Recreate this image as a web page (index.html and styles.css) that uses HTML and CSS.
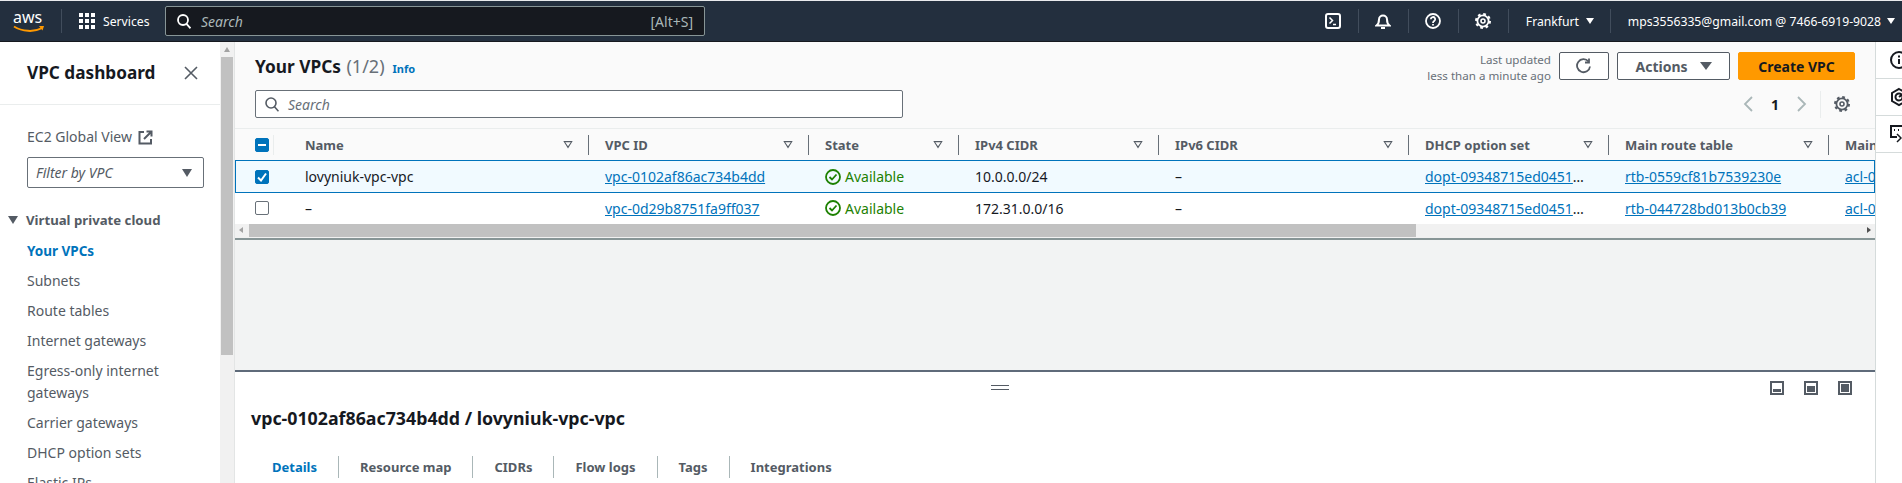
FILE: index.html
```html
<!DOCTYPE html>
<html>
  <head>
    <meta charset="UTF-8" />
    <title>Your VPCs | VPC Console</title>
    <link rel="stylesheet" href="styles.css">
  </head>
  <body>
    <header class="topbar">
      <div class="logo">
        <span class="logo-text">aws</span>
        <svg class="smile" width="32" height="8" viewBox="0 0 32 8"><path d="M1 1.5c8 5 20 6 28 1.5" fill="none" stroke="#f90" stroke-width="2"/><path d="M26 1l5 0-1.500 4.500z" fill="#f90"/></svg>
      </div>
      <div class="services">
        <svg width="16" height="16" viewBox="0 0 16 16" fill="#fff"><rect width="4" height="4"/><rect x="6" width="4" height="4"/><rect x="12" width="4" height="4"/><rect y="6" width="4" height="4"/><rect x="6" y="6" width="4" height="4"/><rect x="12" y="6" width="4" height="4"/><rect y="12" width="4" height="4"/><rect x="6" y="12" width="4" height="4"/><rect x="12" y="12" width="4" height="4"/></svg>
        <span>Services</span>
      </div>
      <div class="global-search">
        <svg width="14" height="15" viewBox="0 0 14 15" fill="none" stroke="#fff" stroke-width="1.800"><circle cx="6" cy="6" r="5"/><path d="M9.500 9.800l4 4.500"/></svg>
        <span class="placeholder">Search</span>
        <span class="shortcut">[Alt+S]</span>
      </div>
      <div class="top-actions">
        <div class="top-item icon-item">
          <svg width="16" height="16" viewBox="0 0 16 16" fill="none" stroke="#fff" stroke-width="2"><rect x="1" y="1" width="14" height="14" rx="2"/><path d="M4.500 4.500l3 3-3 3" stroke-width="1.500"/><path d="M8 11.500h3" stroke-width="1.500"/></svg>
        </div>
        <div class="top-item icon-item">
          <svg width="16" height="17" viewBox="0 0 16 17" fill="none" stroke="#fff" stroke-width="2"><path d="M1.500 12.500c2-1.500 2.500-3 2.500-6a4 4 0 0 1 8 0c0 3 .5 4.500 2.500 6z"/><path d="M6 15h4"/></svg>
        </div>
        <div class="top-item icon-item">
          <svg width="16" height="16" viewBox="0 0 16 16" fill="none" stroke="#fff" stroke-width="1.800"><circle cx="8" cy="8" r="7"/><path d="M5.800 6.200a2.200 2.200 0 1 1 3.300 1.900c-.8.500-1.100 1-1.100 1.900"/><path d="M8 11v1.500"/></svg>
        </div>
        <div class="top-item icon-item">
          <svg width="16" height="16" viewBox="0 0 16 16" fill="none" stroke="#fff"><circle cx="8" cy="8" r="5.600" stroke-width="1.800"/><circle cx="8" cy="8" r="7" stroke-width="2" stroke-dasharray="2.750 2.750"/><circle cx="8" cy="8" r="2" stroke-width="1.600"/></svg>
        </div>
        <div class="top-item region">Frankfurt <i class="caret"></i></div>
        <div class="top-item account">mps3556335@gmail.com @ 7466-6919-9028 <i class="caret"></i></div>
      </div>
    </header>

    <div class="shell">
      <nav class="sidebar">
        <div class="side-head">
          <h2>VPC dashboard</h2>
          <svg width="14" height="14" viewBox="0 0 14 14" fill="none" stroke="#545b64" stroke-width="1.600"><path d="M1 1l12 12M13 1L1 13"/></svg>
        </div>
        <div class="side-body">
          <a class="side-link ec2">EC2 Global View
            <svg width="15" height="15" viewBox="0 0 15 15" fill="none" stroke="#545b64" stroke-width="2"><path d="M6 2H1.500v11.500H13V9"/><path d="M8.500 1.500h5v5M13.500 1.500L6 9"/></svg>
          </a>
          <div class="side-filter"><span>Filter by VPC</span><i class="caret dark"></i></div>
          <div class="side-section"><i class="caret dark"></i>Virtual private cloud</div>
          <ul class="side-list">
            <li class="current">Your VPCs</li>
            <li>Subnets</li>
            <li>Route tables</li>
            <li>Internet gateways</li>
            <li class="two-line">Egress-only internet gateways</li>
            <li>Carrier gateways</li>
            <li>DHCP option sets</li>
            <li>Elastic IPs</li>
          </ul>
        </div>
      </nav>
      <div class="side-scroll"><i class="scroll-up"></i><div class="scroll-thumb"></div></div>

      <main class="main">
        <section class="list-head">
          <div class="title-row">
            <div class="title-left">
              <h1>Your VPCs <span class="count">(1/2)</span></h1>
              <a class="info">Info</a>
            </div>
            <div class="title-actions">
              <div class="updated">Last updated<br />less than a minute ago</div>
              <button class="btn refresh" type="button">
                <svg width="16" height="16" viewBox="0 0 16 16" fill="none" stroke="#545b64" stroke-width="1.800"><path d="M12.500 3.500A6.500 6.500 0 1 0 14 8.500"/><path d="M13 .5v4H9"/></svg>
              </button>
              <button class="btn actions" type="button">Actions <i class="caret grey"></i></button>
              <button class="btn primary" type="button">Create VPC</button>
            </div>
          </div>
          <div class="tools-row">
            <div class="table-search">
              <svg width="14" height="15" viewBox="0 0 14 15" fill="none" stroke="#545b64" stroke-width="1.600"><circle cx="6" cy="6" r="5"/><path d="M9.500 9.800l4 4.500"/></svg>
              <span>Search</span>
            </div>
            <div class="pager">
              <svg width="10" height="16" viewBox="0 0 10 16" fill="none" stroke="#aab7b8" stroke-width="1.800"><path d="M9 1L2 8l7 7"/></svg>
              <b>1</b>
              <svg width="10" height="16" viewBox="0 0 10 16" fill="none" stroke="#aab7b8" stroke-width="1.800"><path d="M1 1l7 7-7 7"/></svg>
              <span class="pager-rule"></span>
              <svg width="16" height="16" viewBox="0 0 16 16" fill="none" stroke="#545b64"><circle cx="8" cy="8" r="5.600" stroke-width="1.800"/><circle cx="8" cy="8" r="7" stroke-width="2" stroke-dasharray="2.750 2.750"/><circle cx="8" cy="8" r="2" stroke-width="1.600"/></svg>
            </div>
          </div>
        </section>

        <section class="table">
          <div class="row head">
            <div class="cell check"><span class="box on"><i class="dash"></i></span></div>
            <div class="cell name">Name<i class="filter"></i></div>
            <div class="cell">VPC ID<i class="filter"></i></div>
            <div class="cell">State<i class="filter"></i></div>
            <div class="cell">IPv4 CIDR<i class="filter"></i></div>
            <div class="cell">IPv6 CIDR<i class="filter"></i></div>
            <div class="cell">DHCP option set<i class="filter"></i></div>
            <div class="cell">Main route table<i class="filter"></i></div>
            <div class="cell">Main network ACL<i class="filter"></i></div>
          </div>
          <div class="row selected">
            <div class="cell check"><span class="box on">
              <svg width="10" height="10" viewBox="0 0 10 10" fill="none" stroke="#fff" stroke-width="2"><path d="M1 5.500l3 3 5-7"/></svg>
            </span></div>
            <div class="cell name">lovyniuk-vpc-vpc</div>
            <div class="cell"><a>vpc-0102af86ac734b4dd</a></div>
            <div class="cell"><span class="ok">
              <svg width="16" height="16" viewBox="0 0 16 16" fill="none" stroke="#1d8102" stroke-width="1.800"><circle cx="8" cy="8" r="7"/><path d="M4.500 8l2.500 2.500 4.500-5"/></svg>Available</span></div>
            <div class="cell">10.0.0.0/24</div>
            <div class="cell">–</div>
            <div class="cell"><a>dopt-09348715ed0451</a>…</div>
            <div class="cell"><a>rtb-0559cf81b7539230e</a></div>
            <div class="cell"><a>acl-0f3a7d21c9e84b6a1</a></div>
          </div>
          <div class="row">
            <div class="cell check"><span class="box"></span></div>
            <div class="cell name">–</div>
            <div class="cell"><a>vpc-0d29b8751fa9ff037</a></div>
            <div class="cell"><span class="ok">
              <svg width="16" height="16" viewBox="0 0 16 16" fill="none" stroke="#1d8102" stroke-width="1.800"><circle cx="8" cy="8" r="7"/><path d="M4.500 8l2.500 2.500 4.500-5"/></svg>Available</span></div>
            <div class="cell">172.31.0.0/16</div>
            <div class="cell">–</div>
            <div class="cell"><a>dopt-09348715ed0451</a>…</div>
            <div class="cell"><a>rtb-044728bd013b0cb39</a></div>
            <div class="cell"><a>acl-0b52e6f08d17c3a94</a></div>
          </div>
          <div class="hscroll">
            <i class="arrow left"></i>
            <div class="hthumb"></div>
            <i class="arrow right"></i>
          </div>
        </section>

        <div class="gap"></div>

        <section class="split">
          <div class="handle"></div>
          <div class="split-modes">
            <svg width="14" height="14" viewBox="0 0 14 14"><rect x="1" y="1" width="12" height="12" fill="none" stroke="#545b64" stroke-width="2"/><rect x="3" y="8" width="8" height="3" fill="#545b64"/></svg>
            <svg width="14" height="14" viewBox="0 0 14 14"><rect x="1" y="1" width="12" height="12" fill="none" stroke="#545b64" stroke-width="2"/><rect x="3" y="5" width="8" height="6" fill="#545b64"/></svg>
            <svg width="14" height="14" viewBox="0 0 14 14"><rect x="1" y="1" width="12" height="12" fill="none" stroke="#545b64" stroke-width="2"/><rect x="3" y="3" width="8" height="8" fill="#545b64"/></svg>
          </div>
          <h2>vpc-0102af86ac734b4dd / lovyniuk-vpc-vpc</h2>
          <div class="tabs">
            <span class="tab active">Details</span>
            <span class="tab">Resource map</span>
            <span class="tab">CIDRs</span>
            <span class="tab">Flow logs</span>
            <span class="tab">Tags</span>
            <span class="tab">Integrations</span>
          </div>
        </section>
      </main>

      <aside class="rail">
        <div class="rail-item">
          <svg width="20" height="20" viewBox="0 0 20 20" fill="none" stroke="#16191f" stroke-width="2"><circle cx="10" cy="10" r="8"/><path d="M10 9v5M10 5.500v2"/></svg>
        </div>
        <div class="rail-item">
          <svg width="20" height="20" viewBox="0 0 20 20" fill="none" stroke="#16191f" stroke-width="2"><path d="M10 2l7 4v8l-7 4-7-4V6z"/><path d="M10 10l5-4" /><circle cx="10" cy="10" r="3.500"/></svg>
        </div>
        <div class="rail-item">
          <svg width="20" height="20" viewBox="0 0 20 20" fill="none" stroke="#16191f" stroke-width="2"><path d="M8 13H2V2h16v7"/><path d="M5 6h2M9 6h2M13 6h2" stroke-dasharray="1 1"/><path d="M8 10l4 4-4 4" stroke-width="1.500"/><path d="M13 18h6"/></svg>
        </div>
      </aside>
    </div>
  </body>
</html>
```

FILE: styles.css
```css
* {
  box-sizing: border-box;
}
html,
body {
  height: 100%;
}
body {
  margin: 0;
  overflow: hidden;
  display: flex;
  flex-direction: column;
  font-family: "Noto Sans", sans-serif;
  font-size: 14px;
  color: #16191f;
  background: #f2f3f3;
}
h1,
h2,
ul {
  margin: 0;
  padding: 0;
}
.caret {
  display: inline-block;
  width: 0;
  height: 0;
  border-left: 4px solid transparent;
  border-right: 4px solid transparent;
  border-top: 6px solid #fff;
}
.caret.dark {
  border-left-width: 5px;
  border-right-width: 5px;
  border-top: 8px solid #545b64;
}
.caret.grey {
  border-left-width: 6px;
  border-right-width: 6px;
  border-top: 8px solid #545b64;
}

/* top bar */
.topbar {
  flex: 0 0 42px;
  display: flex;
  align-items: center;
  background: #232f3e;
  border-top: 1px solid #e9ebed;
  border-bottom: 1px solid #16191f;
  color: #fff;
  font-size: 12.2px;
}
.logo {
  position: relative;
  width: 62px;
  height: 24px;
  border-right: 1px solid #414d5c;
}
.logo-text {
  display: block;
  padding-left: 13px;
  font-size: 16px;
  line-height: 16px;
}
.smile {
  position: absolute;
  left: 13px;
  top: 16px;
}
.services {
  display: flex;
  align-items: center;
  gap: 8px;
  margin-left: 17px;
  width: 86px;
}
.global-search {
  width: 540px;
  height: 30px;
  display: flex;
  align-items: center;
  padding: 0 11px;
  background: #16191f;
  border: 1px solid #879596;
  border-radius: 2px;
  color: #aab7b8;
  font-size: 14px;
}
.global-search .placeholder {
  margin-left: 10px;
  flex: 1;
  font-style: italic;
}
.top-actions {
  margin-left: auto;
  display: flex;
  align-items: center;
  height: 100%;
}
.top-item {
  height: 24px;
  display: flex;
  align-items: center;
  border-right: 1px solid #414d5c;
}
.icon-item {
  width: 50px;
  justify-content: center;
}
.region {
  width: 102px;
  padding-left: 17px;
  gap: 7px;
}
.account {
  border-right: 0;
  padding-left: 17px;
  padding-right: 7px;
  gap: 6px;
}

/* layout */
.shell {
  flex: 1;
  display: flex;
  min-height: 0;
}
.sidebar {
  flex: 0 0 220px;
  background: #fff;
  overflow: hidden;
  color: #545b64;
}
.side-head {
  height: 63px;
  padding: 0 22px 0 27px;
  display: flex;
  align-items: center;
  justify-content: space-between;
  border-bottom: 1px solid #eaeded;
}
.side-head h2 {
  font-size: 17.2px;
  color: #16191f;
  font-weight: 700;
  line-height: 24px;
}
.side-body {
  padding: 20px 0 0 27px;
}
.side-link {
  display: flex;
  align-items: center;
  gap: 6px;
  line-height: 24px;
}
.side-filter {
  width: 177px;
  height: 31px;
  margin-top: 8px;
  padding: 0 11px 0 8px;
  display: flex;
  align-items: center;
  justify-content: space-between;
  border: 1px solid #687078;
  border-radius: 2px;
  font-style: italic;
}
.side-section {
  margin: 20px 0 0 -19px;
  height: 24px;
  display: flex;
  align-items: center;
  gap: 8px;
  font-weight: 700;
  font-size: 13.2px;
}
.side-list {
  list-style: none;
  margin-top: 4px;
}
.side-list li {
  line-height: 22px;
  padding: 4px 0;
  height: 30px;
}
.side-list li.two-line {
  height: 52px;
  width: 150px;
}
.side-list li.current {
  color: #0073bb;
  font-weight: 700;
  font-size: 13.5px;
}
.side-scroll {
  position: relative;
  flex: 0 0 15px;
  background: #f1f1f1;
  border-right: 1px solid #e3e5e5;
}
.scroll-up {
  position: absolute;
  left: 4px;
  top: 5px;
  width: 0;
  height: 0;
  border-left: 3px solid transparent;
  border-right: 3px solid transparent;
  border-bottom: 5px solid #a3a3a3;
}
.scroll-thumb {
  position: absolute;
  left: 1px;
  right: 1px;
  top: 15px;
  height: 298px;
  background: #c1c1c1;
}
.main {
  flex: 1;
  min-width: 0;
  display: flex;
  flex-direction: column;
}
.rail {
  flex: 0 0 27px;
  background: #fff;
  border-left: 1px solid #d5dbdb;
  overflow: hidden;
}
.rail-item {
  height: 37px;
  padding: 8px 0 0 13px;
  border-bottom: 1px solid #d5dbdb;
}
.rail-item svg {
  display: block;
}

/* list header */
.list-head {
  height: 87px;
  padding: 10px 20px 0;
  background: #fafafa;
  border-bottom: 1px solid #eaeded;
}
.title-row {
  display: flex;
  justify-content: space-between;
  align-items: center;
  height: 28px;
}
.title-left {
  display: flex;
  align-items: baseline;
  gap: 8px;
}
.title-left h1 {
  font-size: 17.3px;
  font-weight: 700;
  line-height: 24px;
}
.count {
  font-weight: 400;
  font-size: 18px;
  margin-left: 1px;
  color: #687078;
}
.info {
  color: #0073bb;
  font-size: 11px;
  font-weight: 700;
}
.title-actions {
  display: flex;
  align-items: center;
  gap: 8px;
}
.updated {
  padding-top: 4px;
  text-align: right;
  color: #687078;
  font-size: 11.6px;
  line-height: 16px;
}
.btn {
  height: 28px;
  border: 1px solid #545b64;
  border-radius: 2px;
  background: #fff;
  font-family: inherit;
  font-size: 14px;
  font-weight: 700;
  color: #545b64;
  display: flex;
  align-items: center;
  justify-content: center;
}
.refresh {
  width: 50px;
}
.actions {
  width: 113px;
  gap: 12px;
}
.primary {
  width: 117px;
  background: #ff9900;
  border-color: #ff9900;
  color: #16191f;
}
.tools-row {
  margin-top: 10px;
  display: flex;
  justify-content: space-between;
  align-items: center;
}
.table-search {
  width: 648px;
  height: 28px;
  padding: 0 9px;
  display: flex;
  align-items: center;
  gap: 9px;
  background: #fff;
  border: 1px solid #687078;
  border-radius: 2px;
  color: #687078;
  font-style: italic;
}
.pager {
  display: flex;
  align-items: center;
  height: 28px;
  padding-right: 5px;
}
.pager b {
  width: 44px;
  text-align: center;
}
.pager-rule {
  width: 1px;
  height: 27px;
  margin: 0 13px;
  background: #eaeded;
}

/* table */
.table {
  position: relative;
  overflow: hidden;
  background: #fff;
  border-bottom: 2px solid #879596;
}
.row {
  display: grid;
  grid-template-columns: 39px 315px 220px 150px 200px 250px 200px 220px 220px;
  height: 32px;
  align-items: center;
  margin-top: -1px;
}
.row.head {
  margin-top: 0;
  height: 32px;
  background: #fafafa;
  color: #545b64;
  font-weight: 700;
  font-size: 13px;
  border-bottom: 1px solid #eaeded;
}
.row.selected {
  height: 33px;
  background: #f1faff;
  box-shadow: inset 0 0 0 1px #0073bb;
}
.cell {
  position: relative;
  display: flex;
  align-items: center;
  padding: 0 16px;
  white-space: nowrap;
  overflow: hidden;
}
.head .cell {
  height: 20px;
  justify-content: space-between;
  border-right: 1px solid #687078;
}
.head .cell.check {
  border-right-color: #eaeded;
}
.cell.check {
  padding: 0 0 0 20px;
  overflow: visible;
}
.cell.name {
  padding-left: 31px;
}
.cell a {
  color: #0073bb;
  text-decoration: underline;
}
.box {
  width: 14px;
  height: 14px;
  flex: none;
  display: flex;
  align-items: center;
  justify-content: center;
  border: 1px solid #687078;
  border-radius: 2px;
  background: #fff;
}
.box.on {
  background: #0073bb;
  border-color: #0073bb;
}
.dash {
  width: 8px;
  height: 2px;
  background: #fff;
}
.filter {
  flex: none;
  width: 10px;
  height: 8px;
  margin-right: -1px;
  background: #545b64;
  clip-path: polygon(0 0, 100% 0, 50% 100%, 0 0, 22% 22%, 50% 72%, 78% 22%, 22% 22%);
}
.ok {
  display: flex;
  align-items: center;
  gap: 4px;
  color: #1d8102;
}
.hscroll {
  position: relative;
  height: 14px;
  background: #f1f1f1;
}
.hthumb {
  position: absolute;
  left: 14px;
  width: 1167px;
  top: 0;
  bottom: 1px;
  background: #c1c1c1;
}
.arrow {
  position: absolute;
  top: 3px;
  width: 0;
  height: 0;
  border-top: 3px solid transparent;
  border-bottom: 3px solid transparent;
}
.arrow.left {
  left: 4px;
  border-right: 4px solid #a3a3a3;
}
.arrow.right {
  right: 4px;
  border-left: 4px solid #505050;
}
.gap {
  flex: 0 0 130px;
  background: #f2f3f3;
}

/* split panel */
.split {
  position: relative;
  flex: 1;
  background: #fff;
  border-top: 2px solid #5f6b7a;
  padding: 34px 16px 0;
}
.split h2 {
  font-size: 17.8px;
  font-weight: 700;
  line-height: 24px;
}
.handle {
  position: absolute;
  left: 756px;
  top: 13px;
  width: 18px;
  height: 5px;
  border-top: 1px solid #545b64;
  border-bottom: 1px solid #545b64;
}
.split-modes {
  position: absolute;
  right: 23px;
  top: 9px;
  display: flex;
  gap: 20px;
}
.split-modes svg {
  display: block;
}
.tabs {
  display: flex;
  align-items: center;
  margin-top: 26px;
}
.tab {
  height: 22px;
  line-height: 22px;
  padding: 0 21px;
  color: #545b64;
  font-weight: 700;
  font-size: 13px;
  border-right: 1px solid #aab7b8;
}
.tab:last-child {
  border-right: 0;
}
.tab.active {
  color: #0073bb;
}
```
